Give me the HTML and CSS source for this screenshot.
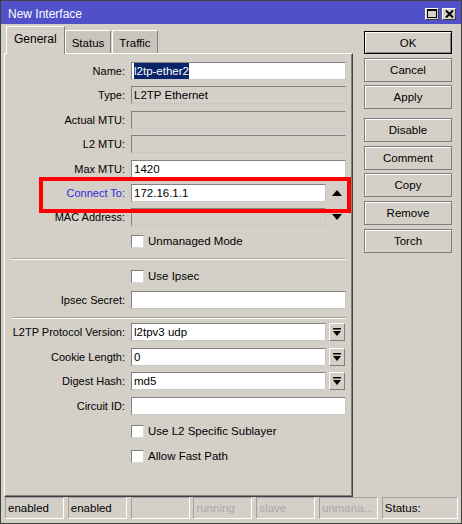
FILE: index.html
```html
<!DOCTYPE html>
<html>
<head>
<meta charset="utf-8">
<link rel="stylesheet" href="styles.css">
</head>
<body>
<div class="window">
  <div class="titlebar">
    <span class="title">New Interface</span>
    <div class="tbtns">
      <span class="tbtn"><svg width="10" height="9" viewBox="0 0 10 9"><rect x="0.5" y="0.5" width="9" height="8" fill="none" stroke="#000"/><rect x="0" y="0" width="10" height="2" fill="#000"/></svg></span>
      <span class="tbtn"><svg width="9" height="8" viewBox="0 0 9 8"><path d="M1 0.5 L8 7.5 M8 0.5 L1 7.5" stroke="#000" stroke-width="2"/></svg></span>
    </div>
  </div>
  <div class="main">
    <div class="left">
      <div class="tabs">
        <div class="tab active">General</div>
        <div class="tab">Status</div>
        <div class="tab t3">Traffic</div>
      </div>
      <div class="panel">
        <div class="row r-first"><div class="lbl">Name:</div><div class="field"><div class="input"><span class="sel">l2tp-ether2</span></div></div></div>
        <div class="row mt6"><div class="lbl">Type:</div><div class="field"><div class="input ro">L2TP Ethernet</div></div></div>
        <div class="row mt7"><div class="lbl">Actual MTU:</div><div class="field"><div class="input ro"></div></div></div>
        <div class="row mt6"><div class="lbl">L2 MTU:</div><div class="field"><div class="input ro"></div></div></div>
        <div class="row mt7"><div class="lbl">Max MTU:</div><div class="field"><div class="input">1420</div></div></div>
        <div class="row mt6"><div class="lbl blue">Connect To:</div><div class="field"><div class="input short">172.16.1.1</div><div class="arrow"><svg width="10" height="6" viewBox="0 0 10 6"><path d="M0 6 L5 0 L10 6 Z" fill="#000"/></svg></div></div></div>
        <div class="row mt6"><div class="lbl">MAC Address:</div><div class="field"><div class="input short ro"></div><div class="arrow"><svg width="10" height="6" viewBox="0 0 10 6"><path d="M0 0 L5 6 L10 0 Z" fill="#000"/></svg></div></div></div>
        <div class="row mt6"><div class="lbl"></div><div class="field"><span class="cb"></span><span class="cbl">Unmanaged Mode</span></div></div>
        <div class="sep sep1"></div>
        <div class="row mt7"><div class="lbl"></div><div class="field"><span class="cb"></span><span class="cbl">Use Ipsec</span></div></div>
        <div class="row mt6"><div class="lbl">Ipsec Secret:</div><div class="field"><div class="input"></div></div></div>
        <div class="sep sep2"></div>
        <div class="row mt4"><div class="lbl">L2TP Protocol Version:</div><div class="field"><div class="input short">l2tpv3 udp</div><div class="dd"><svg width="8" height="8" viewBox="0 0 8 8"><rect x="0" y="0" width="8" height="1.5" fill="#000"/><path d="M0 3 L8 3 L4 8 Z" fill="#000"/></svg></div></div></div>
        <div class="row mt7"><div class="lbl">Cookie Length:</div><div class="field"><div class="input short">0</div><div class="dd"><svg width="8" height="8" viewBox="0 0 8 8"><rect x="0" y="0" width="8" height="1.5" fill="#000"/><path d="M0 3 L8 3 L4 8 Z" fill="#000"/></svg></div></div></div>
        <div class="row mt6"><div class="lbl">Digest Hash:</div><div class="field"><div class="input short">md5</div><div class="dd"><svg width="8" height="8" viewBox="0 0 8 8"><rect x="0" y="0" width="8" height="1.5" fill="#000"/><path d="M0 3 L8 3 L4 8 Z" fill="#000"/></svg></div></div></div>
        <div class="row mt7"><div class="lbl">Circuit ID:</div><div class="field"><div class="input"></div></div></div>
        <div class="row mt7"><div class="lbl"></div><div class="field"><span class="cb"></span><span class="cbl">Use L2 Specific Sublayer</span></div></div>
        <div class="row mt7"><div class="lbl"></div><div class="field"><span class="cb"></span><span class="cbl">Allow Fast Path</span></div></div>
      </div>
    </div>
    <div class="buttons">
      <div class="btn default">OK</div>
      <div class="btn">Cancel</div>
      <div class="btn">Apply</div>
      <div class="btn gap">Disable</div>
      <div class="btn">Comment</div>
      <div class="btn">Copy</div>
      <div class="btn">Remove</div>
      <div class="btn">Torch</div>
    </div>
  </div>
  <div class="statusbar">
    <div class="cell">enabled</div>
    <div class="cell">enabled</div>
    <div class="cell"></div>
    <div class="cell dim">running</div>
    <div class="cell dim">slave</div>
    <div class="cell dim">unmana...</div>
    <div class="cell last">Status:</div>
  </div>
  <div class="highlight"></div>
</div>
</body>
</html>
```

FILE: styles.css
```css
html, body {
  margin: 0;
  padding: 0;
  background: #d4d0c8;
}
.window {
  position: relative;
  width: 462px;
  height: 524px;
  box-sizing: border-box;
  border: 1px solid #404040;
  background: #d4d0c8;
  display: flex;
  flex-direction: column;
  font-family: "Liberation Sans", Arial, sans-serif;
  font-size: 11px;
  color: #000;
  padding-bottom: 4px;
}
.titlebar {
  height: 23px;
  flex: none;
  background: #5050c9;
  display: flex;
  align-items: center;
  justify-content: space-between;
  padding: 0 5px 0 7px;
}
.title {
  color: #fff;
  font-size: 12px;
  margin-top: 2px;
}
.tbtns {
  display: flex;
  gap: 3px;
  margin-top: 2px;
}
.tbtn {
  width: 14px;
  height: 12px;
  box-sizing: border-box;
  background: #d4d0c8;
  border: 1px solid;
  border-color: #fff #404040 #404040 #fff;
  display: flex;
  align-items: center;
  justify-content: center;
}
.main {
  flex: 1;
  display: flex;
}
.left {
  width: 349px;
  margin-left: 3px;
  padding-top: 2px;
  display: flex;
  flex-direction: column;
}
.tabs {
  height: 27px;
  display: flex;
  padding-left: 2px;
  align-items: flex-end;
  position: relative;
  z-index: 1;
}
.tab {
  height: 23px;
  box-sizing: border-box;
  padding: 0 6px;
  display: flex;
  align-items: center;
  background: #c9c5bd;
  border: 1px solid;
  border-color: #fff #808080 transparent #fff;
  border-bottom: none;
  font-size: 11.5px;
  padding-top: 2px;
}
.tab.t3 {
  margin-left: 1px;
}
.tab.active {
  height: 28px;
  margin-bottom: -1px;
  background: #d4d0c8;
  padding: 0 7px;
  padding-bottom: 3px;
  font-size: 12px;
}
.panel {
  flex: 1;
  box-sizing: border-box;
  border: 1px solid;
  border-color: #fff #404040 #404040 #fff;
  box-shadow: inset -1px -1px #808080;
  padding: 8px 6px 0 0;
  display: flex;
  flex-direction: column;
}
.row {
  height: 18px;
  display: flex;
  align-items: center;
  flex: none;
}
.mt4 { margin-top: 4px; }
.mt6 { margin-top: 6px; }
.mt7 { margin-top: 7px; }
.lbl {
  width: 126px;
  flex: none;
  box-sizing: border-box;
  padding-right: 6px;
  text-align: right;
  white-space: nowrap;
}
.lbl.blue {
  color: #2b2bdc;
}
.field {
  flex: 1;
  display: flex;
  align-items: center;
  height: 18px;
}
.input {
  flex: 1;
  height: 18px;
  box-sizing: border-box;
  background: #fff;
  border: 1px solid;
  border-color: #828282 #c8c8c8 #c8c8c8 #828282;
  padding: 0 2px;
  display: flex;
  align-items: center;
  white-space: nowrap;
  font-size: 11.5px;
}
.input.ro {
  background: #d4d0c8;
}
.input.short {
  flex: none;
  width: 195px;
}
.sel {
  background: #0a246a;
  color: #fff;
  padding: 1px 0;
  line-height: 14px;
}
.arrow {
  flex: 1;
  display: flex;
  justify-content: center;
  align-items: center;
  height: 18px;
  padding-left: 1px;
}
.dd {
  width: 16px;
  height: 18px;
  margin-left: 3px;
  box-sizing: border-box;
  border: 1px solid;
  border-color: #fff #808080 #808080 #fff;
  background: #d4d0c8;
  display: flex;
  align-items: center;
  justify-content: center;
}
.cb {
  width: 13px;
  height: 13px;
  box-sizing: border-box;
  background: #fff;
  border: 1px solid;
  border-color: #808080 #d8d8d8 #d8d8d8 #808080;
  flex: none;
}
.cbl {
  margin-left: 4px;
  font-size: 11.5px;
}
.sep {
  height: 2px;
  flex: none;
  margin-left: 7px;
  border-top: 1px solid #a8a49c;
  border-bottom: 1px solid #fff;
  box-sizing: border-box;
}
.sep1 { margin-top: 8px; }
.sep2 { margin-top: 8px; }
.buttons {
  width: 88px;
  margin-left: 11px;
  padding-top: 7px;
  display: flex;
  flex-direction: column;
  gap: 3.6px;
}
.btn {
  height: 24px;
  box-sizing: border-box;
  border: 1px solid #7c7c7c;
  box-shadow: inset 1px 1px #fff;
  display: flex;
  align-items: center;
  justify-content: center;
  font-size: 11.5px;
}
.btn.default {
  height: 23px;
  border-color: #000;
  box-shadow: inset 1px 1px #fff, inset -1px -1px #808080;
}
.btn.gap {
  margin-top: 5.4px;
}
.statusbar {
  height: 22px;
  flex: none;
  display: flex;
  gap: 3.8px;
  padding-left: 4px;
}
.cell {
  width: 59px;
  flex: none;
  box-sizing: border-box;
  border: 1px solid;
  border-color: #a0a0a0 #fff #fff #a0a0a0;
  padding-left: 2px;
  display: flex;
  align-items: center;
  font-size: 11.5px;
  white-space: nowrap;
}
.cell.dim {
  color: #a8a8a8;
}
.cell.last {
  width: 76px;
}
.highlight {
  position: absolute;
  left: 38px;
  top: 176px;
  width: 312px;
  height: 36px;
  box-sizing: border-box;
  border: 4px solid #f00;
}
```
